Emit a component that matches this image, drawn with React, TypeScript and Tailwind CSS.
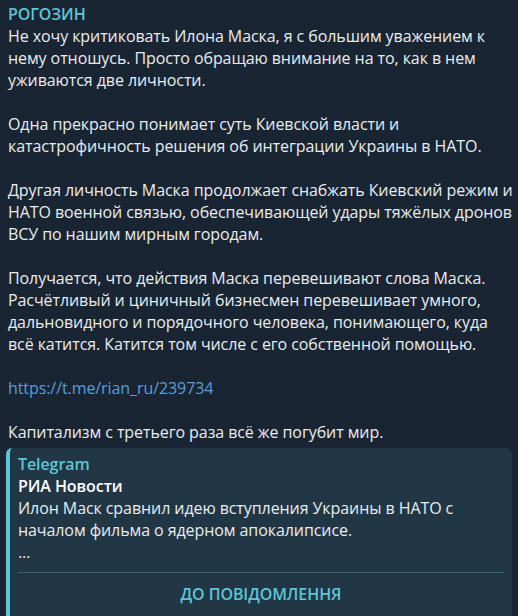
const paragraphs = [
  "Не хочу критиковать Илона Маска, я с большим уважением к нему отношусь. Просто обращаю внимание на то, как в нем уживаются две личности.",
  "Одна прекрасно понимает суть Киевской власти и катастрофичность решения об интеграции Украины в НАТО.",
  "Другая личность Маска продолжает снабжать Киевский режим и НАТО военной связью, обеспечивающей удары тяжёлых дронов ВСУ по нашим мирным городам.",
  "Получается, что действия Маска перевешивают слова Маска. Расчётливый и циничный бизнесмен перевешивает умного, дальновидного и порядочного человека, понимающего, куда\nвсё катится. Катится том числе с его собственной помощью.",
];

export default function App() {
  return (
    <div
      className="w-[518px] h-[616px] overflow-hidden bg-[#1a2533] text-[#e9ecef] text-[16px] leading-[22px] tracking-[-0.08px]"
      style={{ fontFamily: '"Open Sans", "Noto Sans", sans-serif' }}
    >
      <div className="pl-[8px] pr-0 pt-[3px]">
        <p className="font-semibold text-[#5dc5d6]">РОГОЗИН</p>
        {paragraphs.map((p, i) => (
          <p key={i} className={i === 0 ? "whitespace-pre-line" : "mt-[22px] whitespace-pre-line"}>
            {p}
          </p>
        ))}
        <p className="mt-[22px] text-[#5a9ed8]">https://t.me/rian_ru/239734</p>
        <p className="mt-[22px]">Капитализм с третьего раза всё же погубит мир.</p>
      </div>

      <div className="mx-[6px] mt-[5px] rounded-[6px] border-l-[4px] border-[#5bc6d8] bg-[#213745] pl-[8px] pr-[8px] pt-[5px]">
        <p className="font-semibold text-[#5dc5d6]">Telegram</p>
        <p className="font-semibold text-white">РИА Новости</p>
        <p>
          Илон Маск сравнил идею вступления Украины в НАТО с началом фильма о ядерном апокалипсисе.
        </p>
        <p>...</p>
        <div className="mt-[9px] h-px bg-[#3b6474]" />
        <div className="flex justify-center pt-[10px] pb-[20px]">
          <span className="font-semibold text-[#5dc5d6]">ДО ПОВІДОМЛЕННЯ</span>
        </div>
      </div>
    </div>
  );
}
